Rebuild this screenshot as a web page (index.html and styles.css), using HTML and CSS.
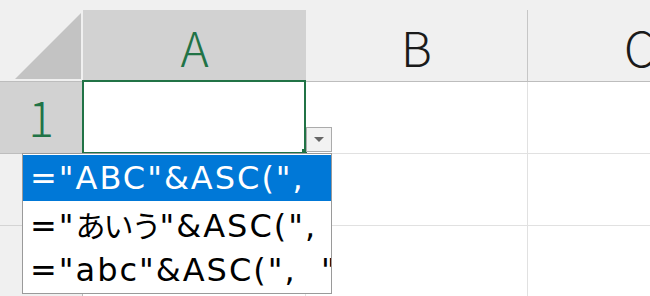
FILE: index.html
```html
<!DOCTYPE html>
<html lang="ja">

<head>
    <meta charset="UTF-8">
    <meta name="viewport" content="width=device-width, initial-scale=1.0">
    <title>ASC</title>
    <link rel="stylesheet" href="styles.css">
</head>

<body>
    <div class="sheet">
        <div class="head">
            <div class="corner">
                <svg width="83" height="71" viewBox="0 0 83 71">
                    <polygon points="15,69 81,3 81,69" fill="#c3c3c3" />
                </svg>
            </div>
            <div class="col col-a col-sel">A</div>
            <div class="col col-b">B</div>
            <div class="col col-c">C</div>
        </div>

        <div class="row">
            <div class="rowhead rowhead-sel">1</div>
            <div class="cell cell-a active">
                <span class="handle"></span>
                <span class="drop"><span class="arrow"></span></span>
            </div>
            <div class="cell cell-b"></div>
            <div class="cell cell-c"></div>
        </div>
        <div class="row">
            <div class="rowhead">2</div>
            <div class="cell cell-a"></div>
            <div class="cell cell-b"></div>
            <div class="cell cell-c"></div>
        </div>
        <div class="row">
            <div class="rowhead">3</div>
            <div class="cell cell-a"></div>
            <div class="cell cell-b"></div>
            <div class="cell cell-c"></div>
        </div>

        <!-- lista de preenchimento automático -->
        <ul class="suggest">
            <li class="selected">="ABC"&amp;ASC(",  ")</li>
            <li>="<span class="jp">あいう</span>"&amp;ASC(",  ")</li>
            <li>="abc"&amp;ASC(",  ")</li>
        </ul>
    </div>
</body>

</html>
```

FILE: styles.css
```css
body {
    margin: 0;
    background-color: #fff;
    font-family: "Noto Sans CJK JP", "Noto Sans", sans-serif;
    overflow: hidden;
}

.sheet {
    position: relative;
    width: 650px;
    height: 296px;
    overflow: hidden;
}

.head {
    display: flex;
    padding-top: 10px;
    background-color: #f0f0f0;
    border-bottom: 1px solid #bdbdbd;
}

.corner {
    width: 83px;
    height: 71px;
    flex: none;
}

.corner svg {
    display: block;
}

.col {
    height: 71px;
    box-sizing: border-box;
    display: flex;
    align-items: center;
    justify-content: center;
    font-size: 48px;
    font-weight: 300;
    color: #1a1a1a;
    flex: none;
}

.col-a {
    width: 223px;
}

.col-b {
    width: 222px;
    border-right: 1px solid #c6c6c6;
}

.col-c {
    width: 222px;
}

.col-sel {
    background-color: #d2d2d2;
    color: #217346;
}

.row {
    display: flex;
    height: 72px;
}

.rowhead,
.cell {
    box-sizing: border-box;
    height: 72px;
    flex: none;
    border-bottom: 1px solid #e1e1e1;
}

.rowhead {
    width: 83px;
    display: flex;
    align-items: center;
    justify-content: center;
    padding-bottom: 4px;
    background-color: #f0f0f0;
    border-right: 1px solid #bdbdbd;
    border-bottom-color: #d4d4d4;
    font-size: 48px;
    font-weight: 300;
    color: #1a1a1a;
}

.rowhead-sel {
    background-color: #d2d2d2;
    color: #217346;
    border-bottom-color: #bdbdbd;
}

.cell-a {
    width: 223px;
    border-right: 1px solid #e1e1e1;
}

.cell-b {
    width: 222px;
    border-right: 1px solid #e1e1e1;
}

.cell-c {
    width: 222px;
}

.active {
    position: relative;
}

.active::after {
    content: "";
    position: absolute;
    left: -1px;
    top: -2px;
    right: -1px;
    bottom: -1px;
    border: 2px solid #217346;
    z-index: 1;
}

.handle {
    position: absolute;
    left: 219px;
    top: 67px;
    width: 5px;
    height: 5px;
    background-color: #217346;
    z-index: 2;
}

.drop {
    position: absolute;
    left: 223px;
    top: 45px;
    width: 26px;
    height: 25px;
    box-sizing: border-box;
    background-color: #f2f2f2;
    border: 1px solid #ababab;
    display: flex;
    align-items: center;
    justify-content: center;
    z-index: 2;
}

.arrow {
    width: 0;
    height: 0;
    border-left: 5px solid transparent;
    border-right: 5px solid transparent;
    border-top: 5px solid #666;
}

.suggest {
    position: absolute;
    left: 22px;
    top: 153px;
    width: 310px;
    height: 141px;
    box-sizing: border-box;
    margin: 0;
    padding: 1px 0 0 0;
    list-style: none;
    background-color: #fff;
    border: 1px solid #9a9a9a;
    overflow: hidden;
    z-index: 3;
}

.suggest li {
    height: 46px;
    line-height: 46px;
    padding-left: 7px;
    font-family: "DejaVu Sans", "Noto Sans CJK JP", sans-serif;
    font-size: 32px;
    letter-spacing: 2px;
    color: #000;
    white-space: pre;
    overflow: hidden;
}

.suggest li.selected {
    background-color: #0078d7;
    color: #fff;
}

.suggest .jp {
    font-family: "Noto Sans CJK JP", sans-serif;
    font-size: 30px;
    letter-spacing: -2px;
}
```
